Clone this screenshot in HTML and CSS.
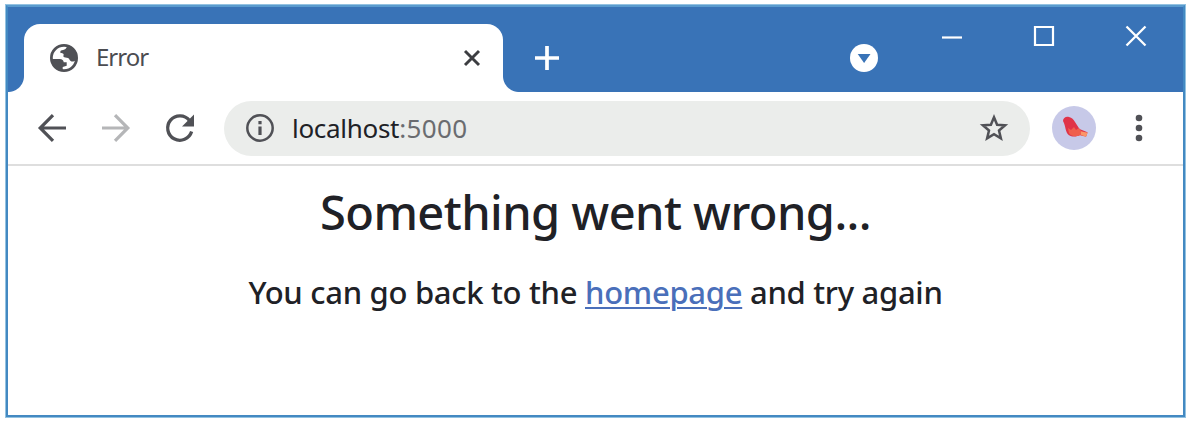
FILE: index.html
```html
<!DOCTYPE html>
<html lang="en">
<head>
<meta charset="utf-8">
<title>Error</title>
<link rel="stylesheet" href="styles.css">
</head>
<body>
<div class="window">
  <div class="frame">
    <header class="titlebar">
      <div class="tab">
        <svg class="globe" viewBox="0 0 28 28"><circle cx="14" cy="14" r="12.600" fill="#fff" stroke="#505156" stroke-width="2.800"/><path fill="#505156" d="M1.500 15h8.200c2.500 0 4 1.300 4 3.300h3v3.500l-4 1.200v3.700C6 26.500 1.500 21 1.500 15zM17 2c-.5 2.500-2 4-5 4.300-1.500.2-2 1.200-1.500 2.700 1 .2 2.500.2 3 1 .5 1-.5 1.800 0 2.700.8 1.200 3 .6 4.500 1.300 1.800.9 1.500 3 3.500 3.500 1.500.4 3-.4 4.500-1.500C27.500 9 23 3 17 2z"/></svg>
        <span class="tab-title">Error</span>
        <svg class="tab-close" viewBox="0 0 18 18"><path d="M2 2l14 14M16 2L2 16" fill="none" stroke="#3c3d41" stroke-width="2.900"/></svg>
      </div>
      <svg class="new-tab" viewBox="0 0 24 24"><path d="M12 0v24M0 12h24" stroke="#fff" stroke-width="3.700"/></svg>
      <svg class="tab-search" viewBox="0 0 28 28"><circle cx="14" cy="14" r="14" fill="#fff"/><path d="M7.700 10h12.800L14.100 19z" fill="#3973b7"/></svg>
      <div class="controls">
        <svg viewBox="0 0 22 22"><path d="M1 12.500h20" stroke="#fff" stroke-width="2.200"/></svg>
        <svg viewBox="0 0 22 22"><path d="M2 2h18v18H2z" fill="none" stroke="#fff" stroke-width="2.200"/></svg>
        <svg viewBox="0 0 22 22"><path d="M1.500 1.500l19 19M20.500 1.500l-19 19" stroke="#fff" stroke-width="2.300"/></svg>
      </div>
    </header>
    <nav class="toolbar">
      <svg class="nav-icon" viewBox="0 0 28 28"><path d="M15 1.200L2.200 14 15 26.800M2.500 14H28" fill="none" stroke="#505156" stroke-width="3.200"/></svg>
      <svg class="nav-icon forward" viewBox="0 0 28 28"><path d="M13 1.200L25.800 14 13 26.800M25.500 14H0" fill="none" stroke="#b5b6b8" stroke-width="3.200"/></svg>
      <svg class="nav-icon reload" viewBox="0 0 28 28"><path d="M23.500 6.500A12.200 12.200 0 1 0 25.600 17.500" fill="none" stroke="#505156" stroke-width="3.300"/><path d="M28 .5v12H16z" fill="#505156"/></svg>
      <div class="address">
        <svg class="info" viewBox="0 0 28 28"><circle cx="14" cy="14" r="12.700" fill="none" stroke="#505156" stroke-width="2.500"/><path d="M14 12.500v8.500M14 7v3.200" stroke="#505156" stroke-width="3.200"/></svg>
        <span class="url"><span class="host">localhost</span><span class="port">:5000</span></span>
        <svg class="star" viewBox="0 0 28 28"><path d="M14 3.300l3.100 7.400 8 .6-6.100 5.200 1.900 7.900-6.900-4.200-6.900 4.200L9 16.500l-6.100-5.200 8-.6z" fill="none" stroke="#505156" stroke-width="2.500"/></svg>
      </div>
      <svg class="avatar" viewBox="0 0 44 44"><circle cx="22" cy="22" r="22" fill="#c7c9e8"/><path d="M11 15c0-3 3-5 6-4 3 .5 4.500 2.500 6 5l4.500 7 8 3.300-1.500 4-6-1.200c-3 1.700-8 2.200-11 .2-4-3-3-9-6-14.300z" fill="#e03348"/><path d="M16 22l3 2 3-3 2 3 3-2 2 3 6.500 1.800-1.500 4-6-1.500c-4 1.700-9 1.200-11-2z" fill="#ef5f4d"/><path d="M29 25.500l6.500 1.300-1.500 4-5-2z" fill="#fa9668"/></svg>
      <svg class="menu" viewBox="0 0 8 28"><g fill="#505156"><circle cx="4" cy="4" r="3.300"/><circle cx="4" cy="14" r="3.300"/><circle cx="4" cy="24" r="3.300"/></g></svg>
    </nav>
    <main class="page">
      <h1 class="heading">Something went wrong...</h1>
      <p class="message">You can go back to the <a class="link" href="#">homepage</a> and try again</p>
    </main>
  </div>
</div>
</body>
</html>
```
FILE: styles.css
```css
* { box-sizing: border-box; }
body { margin: 0; padding: 4px 5px; background: #fff; font-family: "Noto Sans", "Open Sans", sans-serif; color: #202126; }
svg { display: block; flex: none; overflow: visible; }
.window { width: 1181px; height: 414px; border: 1px solid #93c2e1; }
.frame { height: 412px; border: 2px solid #4389c2; border-top-color: #5a9bce; background: #fff; overflow: hidden; }
.titlebar { display: flex; height: 85px; padding-left: 16px; background: #3973b7; }
.tab { position: relative; display: flex; align-items: center; width: 479px; height: 68px; margin-top: 17px; padding: 0 22px 0 26px; background: #fff; border-radius: 16px 16px 0 0; }
.tab::before, .tab::after { content: ""; position: absolute; bottom: 0; width: 16px; height: 16px; }
.tab::before { left: -16px; background: radial-gradient(circle at 0 0, transparent 15.5px, #fff 16.5px); }
.tab::after { right: -16px; background: radial-gradient(circle at 100% 0, transparent 15.5px, #fff 16.5px); }
.globe { width: 28px; height: 28px; }
.tab-title { margin-left: 18px; padding-bottom: 2px; font-size: 24px; line-height: 32px; letter-spacing: -1px; color: #4b4c51; }
.tab-close { width: 18px; height: 18px; margin-left: auto; }
.new-tab { width: 24px; height: 24px; margin: 39px 0 0 32px; }
.tab-search { width: 28px; height: 28px; margin: 37px 0 0 291px; }
.controls { display: flex; gap: 70px; margin: 18px 0 0 63px; }
.controls svg { width: 22px; height: 22px; }
.toolbar { display: flex; align-items: center; height: 74px; border-bottom: 2px solid #dedede; padding-left: 30px; }
.nav-icon { width: 28px; height: 28px; }
.forward { margin-left: 36px; }
.reload { margin-left: 36px; }
.address { display: flex; align-items: center; width: 806px; height: 55px; margin-left: 30px; padding: 0 22px; border-radius: 28px; background: #ebedeb; }
.info, .star { width: 28px; height: 28px; }
.url { margin-left: 18px; padding-bottom: 1px; font-size: 26px; line-height: 36px; letter-spacing: -.3px; }
.port { color: #6a6c70; letter-spacing: .4px; }
.star { margin-left: auto; }
.avatar { width: 44px; height: 44px; margin-left: 22px; }
.menu { width: 8px; height: 28px; margin-left: 39px; }
.page { text-align: center; }
.heading { margin: 14px 0 0; font-size: 47px; line-height: 64px; font-weight: 500; letter-spacing: -.57px; }
.message { margin: 27px 0 0; font-size: 31px; line-height: 42px; font-weight: 500; letter-spacing: -.29px; }
.link { color: #4a6fba; text-decoration: underline; text-decoration-thickness: 2px; text-underline-offset: 3px; }
```
